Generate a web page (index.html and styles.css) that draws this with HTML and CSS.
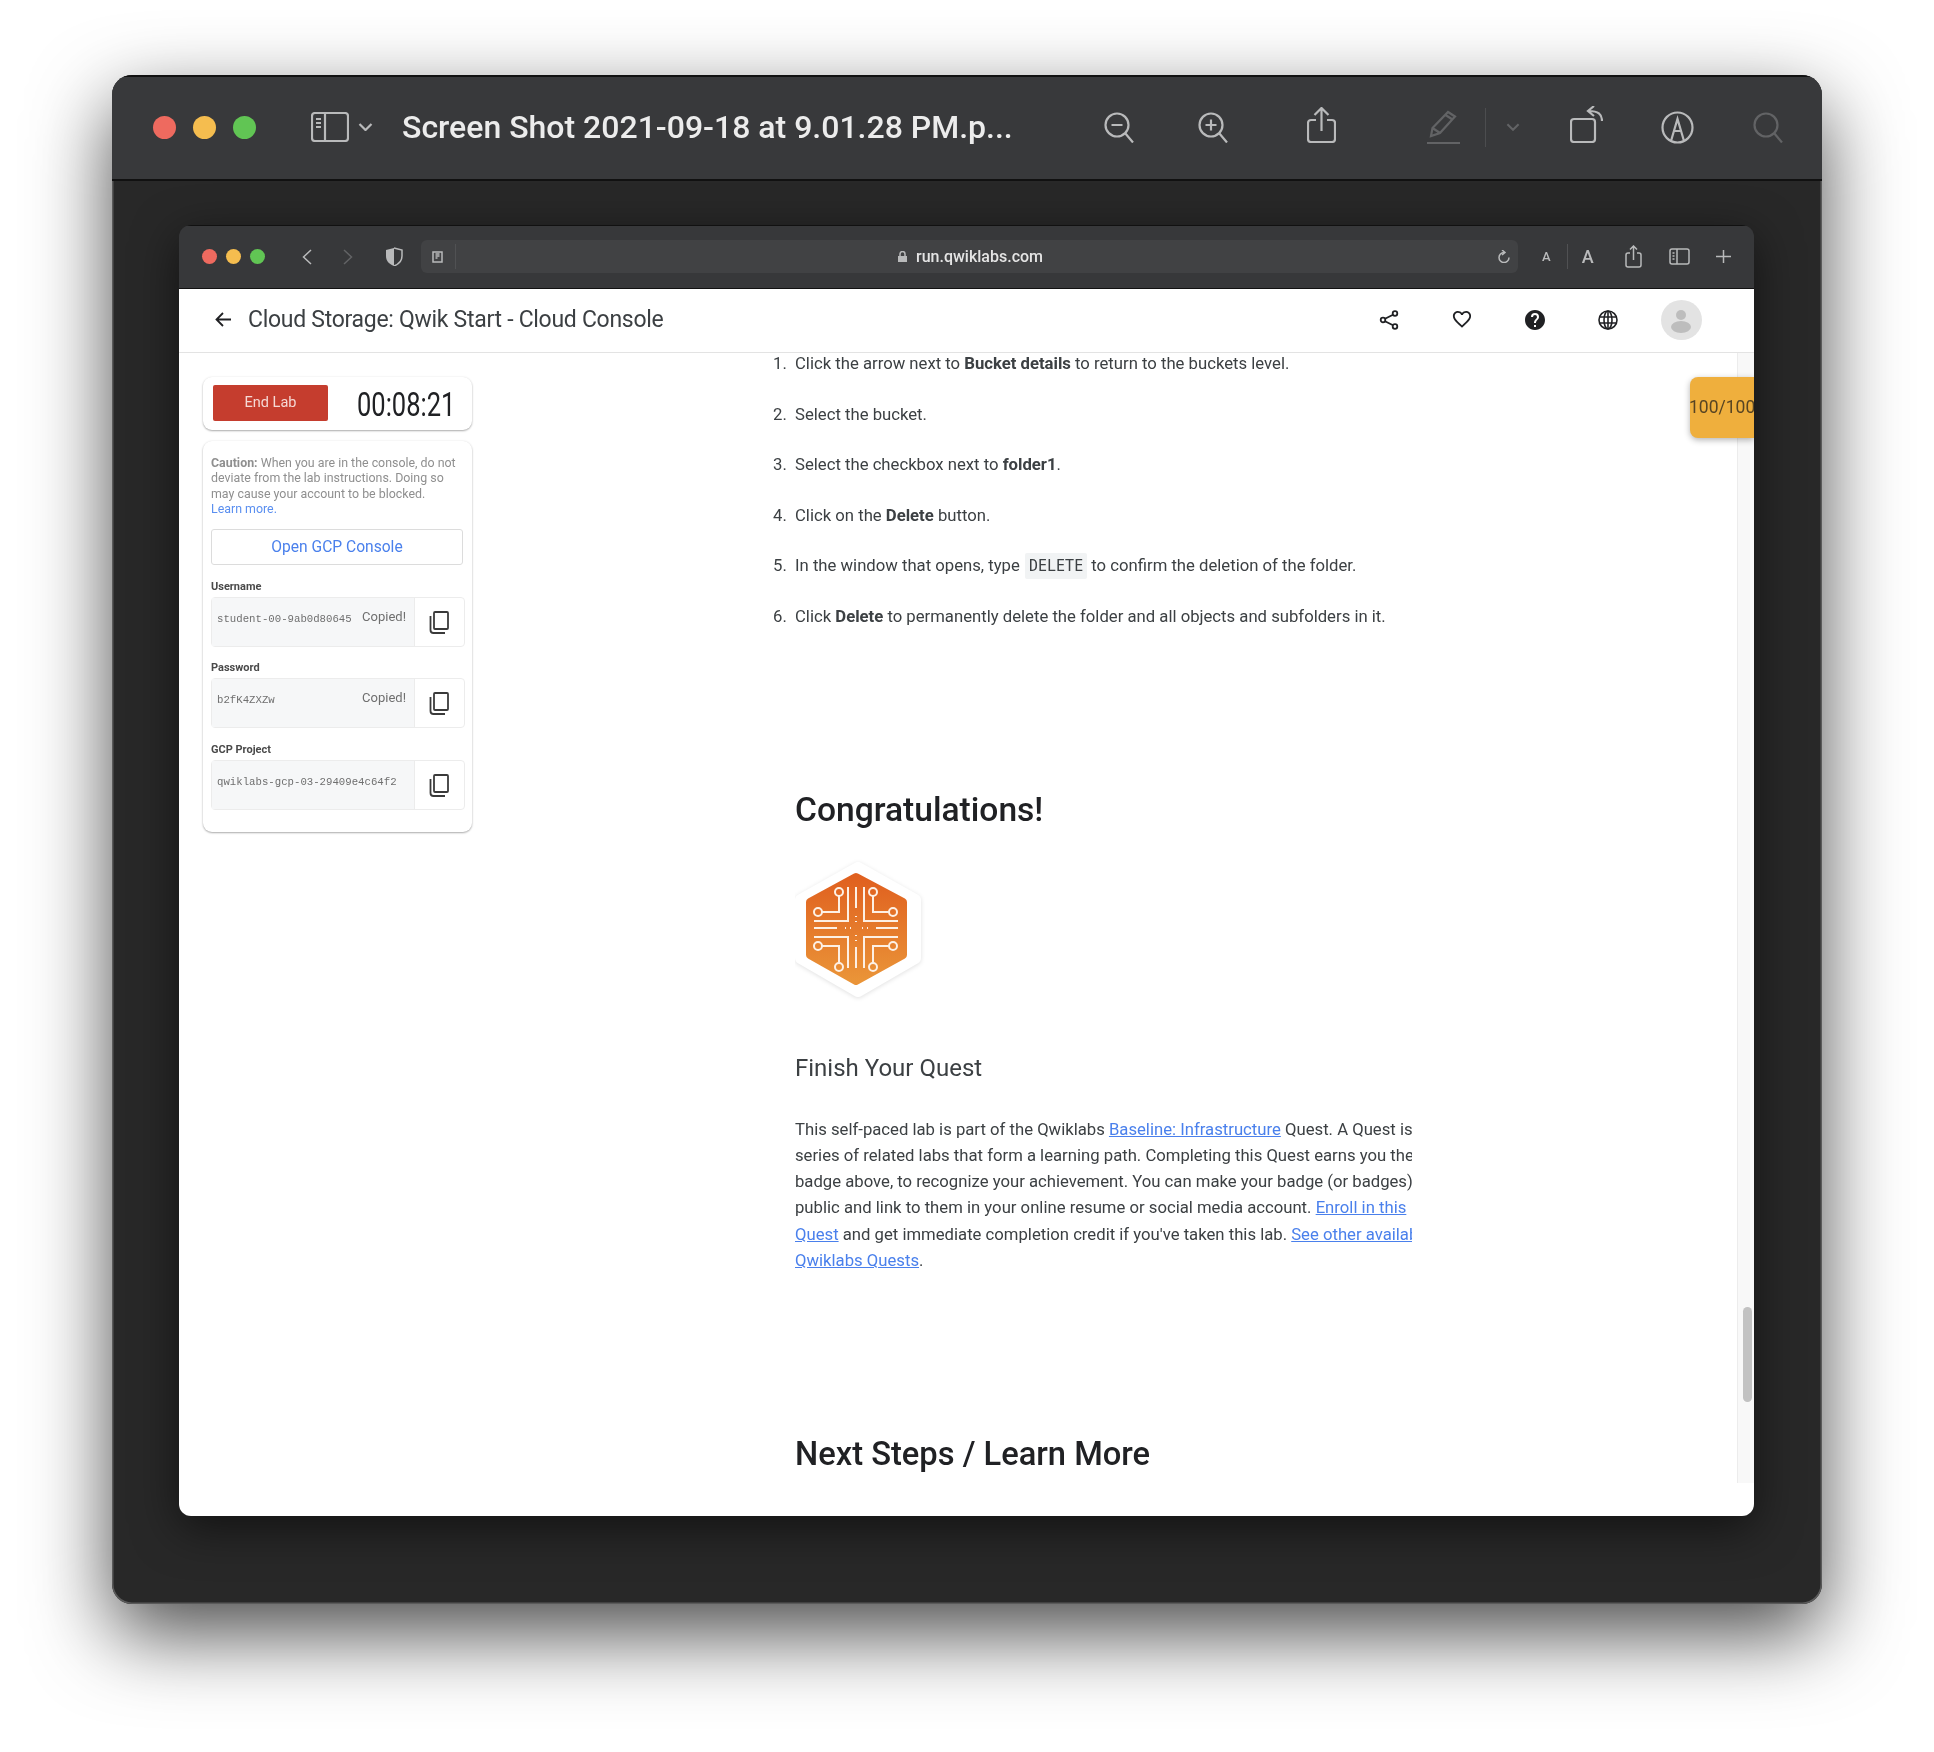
FILE: index.html
```html
<!DOCTYPE html>
<html lang="en">
<head>
    <meta charset="UTF-8">
    <title>Screen Shot 2021-09-18 at 9.01.28 PM</title>
    <link rel="stylesheet" href="styles.css">
</head>
<body>
<div class="preview">
    <div class="preview-bar">
        <div class="lights">
            <span class="light red"></span>
            <span class="light yellow"></span>
            <span class="light green"></span>
        </div>
        <svg class="i-sidebar" width="38" height="30" viewBox="0 0 38 30"><rect x="1" y="1" width="36" height="28" rx="3"/><path d="M14 1v28M5 7h5M5 11h5M5 15h5"/></svg>
        <svg class="i-chev" width="15" height="8" viewBox="0 0 15 8"><path d="M1.500 1l6 6 6-6"/></svg>
        <div class="preview-title">Screen Shot 2021-09-18 at 9.01.28 PM.p...</div>
        <svg class="i-zoomout" width="30" height="31" viewBox="0 0 30 31"><circle cx="13" cy="13" r="11.500"/><path d="M7.500 13h11M21 21l8 9.500" /></svg>
        <svg class="i-zoomin" width="30" height="31" viewBox="0 0 30 31"><circle cx="13" cy="13" r="11.500"/><path d="M7.500 13h11M13 7.500v11M21 21l8 9.500"/></svg>
        <svg class="i-share" width="29" height="36" viewBox="0 0 29 36"><path d="M9 13H4a3 3 0 0 0-3 3v16a3 3 0 0 0 3 3h21a3 3 0 0 0 3-3V16a3 3 0 0 0-3-3h-5M14.500 24V1.500M7.500 8l7-7 7 7"/></svg>
        <svg class="i-pencil dim" width="33" height="34" viewBox="0 0 33 34"><path d="M4 26l1.500-8L21 2l7 4.500L13 23zM5.500 18l7.500 5M18.500 5l7 4.500M0 33h33"/></svg>
        <span class="bar-divider"></span>
        <svg class="i-chev2 dim" width="14" height="8" viewBox="0 0 15 8"><path d="M1.500 1l6 6 6-6"/></svg>
        <svg class="i-rotate" width="33" height="37" viewBox="0 0 33 37"><rect x="1" y="13" width="24" height="23" rx="3"/><path d="M32 15c0-7-4-10-13-10M24 0l-6 5 6 5"/></svg>
        <svg class="i-markup" width="33" height="33" viewBox="0 0 33 33"><circle cx="16.500" cy="16.500" r="15"/><path d="M10 30l6.500-22 6.500 22M13 20h7"/></svg>
        <svg class="i-search dim" width="30" height="31" viewBox="0 0 30 31"><circle cx="13" cy="13" r="11.500"/><path d="M21 21l8 9.500"/></svg>
    </div>

    <div class="browser">
        <div class="browser-bar">
            <div class="lights small">
                <span class="light red"></span>
                <span class="light yellow"></span>
                <span class="light green"></span>
            </div>
            <svg class="b-back" width="10" height="16" viewBox="0 0 10 16"><path d="M9 1L1.500 8 9 15"/></svg>
            <svg class="b-forward dim" width="10" height="16" viewBox="0 0 10 16"><path d="M1 1l7.500 7L1 15"/></svg>
            <svg class="b-shield" width="18" height="19" viewBox="0 0 18 19"><path class="solid" d="M9 1L1 3v6c0 5 3 8 8 10z"/><path d="M9 1l8 2v6c0 5-3 8-8 10"/></svg>
            <div class="url-bar">
                <svg class="b-reader" width="11" height="12" viewBox="0 0 11 12"><rect x="1" y="1" width="9" height="10"/><path d="M3.500 3h4M3.500 5h4M3.500 7h2"/></svg>
                <span class="url-divider"></span>
                <div class="url-text">
                    <svg width="9" height="11" viewBox="0 0 9 11"><path class="solid" d="M0 5h9v6H0z"/><path d="M2 5V3a2.500 2.500 0 0 1 5 0v2"/></svg>
                    <span>run.qwiklabs.com</span>
                </div>
                <svg class="b-reload" width="13" height="13" viewBox="0 0 13 13"><path d="M7 2.500a5 5 0 1 0 5 5M5 0l3 2.500L5 5"/></svg>
            </div>
            <span class="font-small">A</span>
            <span class="url-divider font-sep"></span>
            <span class="font-big">A</span>
            <svg class="b-share" width="17" height="23" viewBox="0 0 17 23"><path d="M5 8H3a2 2 0 0 0-2 2v10a2 2 0 0 0 2 2h11a2 2 0 0 0 2-2V10a2 2 0 0 0-2-2h-2M8.500 15V1M5 4.500L8.500 1 12 4.500"/></svg>
            <svg class="b-sidebar" width="21" height="17" viewBox="0 0 21 17"><rect x="1" y="1" width="19" height="15" rx="2"/><path d="M8 1v15M3.500 5h2M3.500 8h2M3.500 11h2"/></svg>
            <svg class="b-plus" width="15" height="13" viewBox="0 0 15 13"><path d="M7.500 0v13M0 6.500h15"/></svg>
        </div>

        <div class="lab-page">
            <div class="lab-header">
                <svg class="h-arrow" width="16" height="15" viewBox="0 0 16 15"><path d="M16 7.500H2M8 1L1.500 7.500 8 14"/></svg>
                <div class="lab-title">Cloud Storage: Qwik Start - Cloud Console</div>
                <svg class="h-share" width="20" height="20" viewBox="0 0 20 20"><circle cx="16" cy="3.500" r="2.300"/><circle cx="4" cy="10" r="2.300"/><circle cx="16" cy="16.500" r="2.300"/><path d="M14 4.700L6 8.800M6 11.200l8 4.100"/></svg>
                <svg class="h-heart" width="22" height="20" viewBox="0 0 24 22"><path d="M16.500 0c-1.740 0-3.410.81-4.500 2.090C10.910.81 9.240 0 7.500 0 4.420 0 2 2.420 2 5.500c0 3.780 3.400 6.860 8.550 11.540L12 18.350l1.450-1.320C18.600 12.360 22 9.280 22 5.500 22 2.420 19.580 0 16.500 0zm-4.400 15.550l-.1.100-.1-.1C7.140 11.240 4 8.390 4 5.500 4 3.500 5.500 2 7.500 2c1.540 0 3.040.99 3.570 2.360h1.870C13.460 2.990 14.960 2 16.500 2c2 0 3.500 1.500 3.500 3.500 0 2.890-3.140 5.740-7.900 10.050z"/></svg>
                <svg class="h-help" width="20" height="20" viewBox="0 0 24 24"><path d="M12 0C5.370 0 0 5.370 0 12s5.370 12 12 12 12-5.370 12-12S18.630 0 12 0zm1.200 20.400h-2.400V18h2.400v2.400zm2.480-9.300l-1.080 1.100c-.86.880-1.400 1.600-1.400 3.400h-2.400v-.6c0-1.320.54-2.520 1.400-3.400l1.490-1.510c.44-.43.710-1.030.710-1.690a2.400 2.400 0 0 0-4.800 0H7.200a4.800 4.800 0 0 1 9.600 0c0 1.060-.43 2.020-1.120 2.700z"/></svg>
                <svg class="h-globe" width="20" height="20" viewBox="0 0 20 20"><circle cx="10" cy="10" r="9"/><ellipse cx="10" cy="10" rx="4" ry="9"/><path d="M10 1v18M1.500 7h17M1.500 13h17"/></svg>
                <div class="avatar">
                    <svg width="40" height="40" viewBox="0 0 40 40"><circle cx="20" cy="15" r="5"/><ellipse cx="20" cy="27" rx="10" ry="6"/></svg>
                </div>
            </div>

            <div class="score">100/100</div>

            <div class="lab-body">
                <div class="side">
                    <div class="card timer-card">
                        <div class="end-btn">End Lab</div>
                        <div class="timer">00:08:21</div>
                    </div>
                    <div class="card">
                        <p class="caution"><b>Caution:</b> When you are in the console, do not deviate from the lab instructions. Doing so may cause your account to be blocked.<br><a href="#">Learn more.</a></p>
                        <div class="console-btn">Open GCP Console</div>

                        <div class="cred-label">Username</div>
                        <div class="cred">
                            <div class="cred-value"><code>student-00-9ab0d80645</code><span>Copied!</span></div>
                            <div class="cred-copy"><svg width="20" height="23" viewBox="0 0 20 23"><rect x="5" y="1" width="14" height="17" rx="1"/><path d="M1.500 5v14a3 3 0 0 0 3 3H16"/></svg></div>
                        </div>

                        <div class="cred-label">Password</div>
                        <div class="cred">
                            <div class="cred-value"><code>b2fK4ZXZw</code><span>Copied!</span></div>
                            <div class="cred-copy"><svg width="20" height="23" viewBox="0 0 20 23"><rect x="5" y="1" width="14" height="17" rx="1"/><path d="M1.500 5v14a3 3 0 0 0 3 3H16"/></svg></div>
                        </div>

                        <div class="cred-label">GCP Project</div>
                        <div class="cred">
                            <div class="cred-value"><code>qwiklabs-gcp-03-29409e4c64f2</code></div>
                            <div class="cred-copy"><svg width="20" height="23" viewBox="0 0 20 23"><rect x="5" y="1" width="14" height="17" rx="1"/><path d="M1.500 5v14a3 3 0 0 0 3 3H16"/></svg></div>
                        </div>
                    </div>
                </div>

                <div class="doc">
                    <ol class="steps">
                        <li>Click the arrow next to <b>Bucket details</b> to return to the buckets level.</li>
                        <li>Select the bucket.</li>
                        <li>Select the checkbox next to <b>folder1</b>.</li>
                        <li>Click on the <b>Delete</b> button.</li>
                        <li>In the window that opens, type <code>DELETE</code> to confirm the deletion of the folder.</li>
                        <li>Click <b>Delete</b> to permanently delete the folder and all objects and subfolders in it.</li>
                    </ol>
                    <div class="doc-col">
                        <h2 class="congrats">Congratulations!</h2>
                        <svg class="badge" width="127" height="136" viewBox="16 12 127 136">
                            <defs>
                                <linearGradient id="orange" x1="0" y1="0" x2="0" y2="1">
                                    <stop offset="0" stop-color="#e0601f"/>
                                    <stop offset="1" stop-color="#ea9438"/>
                                </linearGradient>
                            </defs>
                            <path class="hex-out" d="M79 18l57 32v58l-57 33-57-33V50z"/>
                            <path class="hex-in" d="M77 27l47 25v53l-47 26-46-26V52z"/>
                            <g class="circuit">
                                <path d="M77 37v21M77 66v1M77 71v1M77 85v1M77 90v1M77 97v21M35 78h23M66 78h1M71 78h1M83 78h1M88 78h1M97 78h22"/>
                                <path d="M69 37v34H35M85 37v34h34M35 87h34v31M119 87H85v31"/>
                                <path d="M60 46v16H43M94 46v16h16M43 96h17v17M110 96H94v17"/>
                                <circle cx="60" cy="42" r="4"/>
                                <circle cx="94" cy="42" r="4"/>
                                <circle cx="39" cy="62" r="4"/>
                                <circle cx="114" cy="62" r="4"/>
                                <circle cx="39" cy="96" r="4"/>
                                <circle cx="114" cy="96" r="4"/>
                                <circle cx="60" cy="117" r="4"/>
                                <circle cx="94" cy="117" r="4"/>
                            </g>
                        </svg>
                        <h3 class="quest">Finish Your Quest</h3>
                        <p class="quest-text">This self-paced lab is part of the Qwiklabs <a href="#">Baseline: Infrastructure</a> Quest. A Quest is a<br>series of related labs that form a learning path. Completing this Quest earns you the<br>badge above, to recognize your achievement. You can make your badge (or badges)<br>public and link to them in your online resume or social media account. <a href="#">Enroll in this</a><br><a href="#">Quest</a> and get immediate completion credit if you've taken this lab. <a href="#">See other available</a><br><a href="#">Qwiklabs Quests</a>.</p>
                        <h2 class="next">Next Steps / Learn More</h2>
                    </div>
                </div>

                <div class="track"><div class="thumb"></div></div>
            </div>
        </div>
    </div>
</div>
</body>
</html>
```

FILE: styles.css
```css
* {
    margin: 0;
    padding: 0;
    box-sizing: border-box;
}

html, body {
    width: 1934px;
    height: 1752px;
    overflow: hidden;
    background-color: #fff;
}

body {
    padding: 75px 112px 0;
    font-family: Roboto, "Liberation Sans", sans-serif;
}

svg {
    display: block;
    flex: none;
    fill: none;
    stroke: #b9babb;
    stroke-width: 2.2;
}

svg.dim {
    stroke: #626365;
}

svg .solid {
    fill: #b9babb;
    stroke: none;
}

/* the whole shot is a soft, upscaled image */
.preview {
    width: 1710px;
    height: 1529px;
    border-radius: 20px;
    background-color: #282828;
    box-shadow: inset 0 0 0 1.500px #5a5a5a, 0 30px 80px rgba(0, 0, 0, 0.7);
    overflow: hidden;
    filter: blur(0.4px);
}

.preview-bar {
    height: 106px;
    display: flex;
    align-items: center;
    padding: 0 0 2px 41px;
    background-color: #38393b;
    border-top: 2px solid #111;
    border-bottom: 2px solid #111;
}

.lights {
    display: flex;
    gap: 17px;
}

.light {
    width: 23px;
    height: 23px;
    border-radius: 50%;
}

.light.red { background-color: #ee6a5f; }
.light.yellow { background-color: #f5bd4f; }
.light.green { background-color: #61c554; }

.lights.small {
    gap: 9px;
}

.lights.small .light {
    width: 15px;
    height: 15px;
}

.i-sidebar { margin-left: 55px; }
.i-chev { margin-left: 9px; }

.preview-title {
    width: 610px;
    margin-left: 29px;
    color: #ececec;
    font-size: 32px;
    font-weight: 500;
    white-space: nowrap;
}

.i-zoomout { margin-left: 92px; }
.i-zoomin { margin-left: 64px; }
.i-share { margin: 0 0 4px 79px; }
.i-pencil { margin-left: 91px; }

.bar-divider {
    width: 1px;
    height: 39px;
    margin-left: 25px;
    background-color: #4c4d4f;
}

.i-chev2 { margin-left: 20px; }
.i-rotate { margin: 0 0 6px 50px; }
.i-markup { margin-left: 58px; }
.i-search { margin-left: 59px; }

.browser {
    width: 1575px;
    height: 1291px;
    margin: 44px 0 0 67px;
    border-radius: 12px;
    overflow: hidden;
    box-shadow: 0 12px 45px rgba(0, 0, 0, 0.55);
}

.browser-bar {
    height: 64px;
    display: flex;
    align-items: center;
    padding: 0 0 1px 23px;
    background-color: #37383a;
    border-top: 1px solid #111;
    border-bottom: 1px solid #111;
}

.browser-bar svg {
    stroke-width: 1.500;
}

.b-back { margin-left: 37px; }
.b-forward { margin-left: 31px; }
.b-shield { margin-left: 32px; }

.url-bar {
    width: 1097px;
    height: 33px;
    margin-left: 18px;
    display: flex;
    align-items: center;
    border-radius: 6px;
    background-color: #414244;
}

.b-reader { margin-left: 11px; }

.url-divider {
    width: 1px;
    height: 25px;
    margin-left: 12px;
    background-color: #505153;
}

.url-text {
    flex: 1;
    margin-left: 442px;
    display: flex;
    align-items: center;
    gap: 9px;
    color: #e4e4e4;
    font-size: 16px;
    font-weight: 500;
}

.b-reload { margin-right: 8px; }

.font-small {
    margin-left: 24px;
    color: #b9babb;
    font-size: 13px;
    font-weight: 500;
}

.font-sep {
    margin-left: 16px;
}

.font-big {
    margin-left: 14px;
    color: #b9babb;
    font-size: 18px;
    font-weight: 500;
}

.b-share { margin-left: 31px; }
.b-sidebar { margin-left: 27px; }
.b-plus { margin-left: 26px; }

.lab-page {
    height: 1227px;
    background-color: #fff;
    position: relative;
    display: flex;
    flex-direction: column;
}

.lab-header {
    height: 64px;
    flex: none;
    display: flex;
    align-items: center;
    padding: 0 0 2px 36px;
    border-bottom: 1px solid #e3e3e3;
}

.lab-header svg {
    fill: #202124;
    stroke: none;
}

.lab-header .h-arrow,
.lab-header .h-share {
    fill: none;
    stroke: #202124;
    stroke-width: 1.800;
}

.lab-title {
    width: 416px;
    margin-left: 17px;
    color: #3c4043;
    font-size: 23px;
    letter-spacing: -0.290px;
    white-space: nowrap;
}

.h-share { margin-left: 715px; }
.h-heart { margin: 2px 0 0 52px; }
.h-help { margin-left: 52px; }

.lab-header .h-globe {
    margin-left: 53px;
    fill: none;
    stroke: #202124;
    stroke-width: 1.600;
}

.avatar {
    width: 41px;
    height: 40px;
    margin-left: 43px;
    border-radius: 50%;
    background-color: #e3e3e3;
}

.lab-header .avatar svg {
    fill: #bdbdbd;
}

.score {
    position: absolute;
    top: 88px;
    right: 0;
    width: 64px;
    height: 61px;
    border-radius: 8px 0 0 8px;
    background-color: #efaf3d;
    box-shadow: 0 2px 6px rgba(0, 0, 0, 0.3);
    color: #574423;
    font-size: 17.500px;
    line-height: 61px;
    text-indent: -1px;
    white-space: nowrap;
    overflow: hidden;
    z-index: 2;
}

.lab-body {
    height: 1130px;
    display: flex;
    overflow: hidden;
}

.side {
    width: 594px;
    flex: none;
    padding: 24px 0 0 24px;
}

.card {
    width: 269px;
    margin-bottom: 11px;
    padding: 8px 8px 22px;
    border-radius: 9px;
    background-color: #fff;
    box-shadow: 0 1px 2px rgba(0, 0, 0, 0.32), 0 0 3px rgba(0, 0, 0, 0.05);
}

.timer-card {
    height: 53px;
    padding: 8px 0 0 10px;
    display: flex;
}

.end-btn {
    width: 115px;
    height: 36px;
    border-radius: 2px;
    background-color: #c53d2e;
    color: #f5d9d5;
    font-size: 14.500px;
    line-height: 36px;
    text-align: center;
}

.timer {
    margin-left: 29px;
    width: 96px;
    color: #202124;
    font-size: 34px;
    line-height: 38px;
    transform: scaleX(0.75);
    transform-origin: left;
    white-space: nowrap;
}

.caution {
    padding-top: 6px;
    color: #8f8f8f;
    font-size: 12.400px;
    line-height: 15.300px;
}

.caution a {
    color: #5a8ff0;
    text-decoration: none;
}

.console-btn {
    width: 252px;
    height: 36px;
    margin-top: 13px;
    border: 1px solid #dcdcdc;
    border-radius: 3px;
    color: #4a80ec;
    font-size: 15.600px;
    line-height: 34px;
    text-align: center;
}

.cred-label {
    margin-top: 14.500px;
    color: #4a4a4a;
    font-size: 11px;
    font-weight: 700;
    line-height: 14px;
}

.cred {
    width: 254px;
    height: 50px;
    margin-top: 3px;
    display: flex;
    border: 1px solid #ececec;
    border-radius: 4px;
}

.cred-value {
    width: 203px;
    padding: 0 8px 0 5px;
    display: flex;
    justify-content: space-between;
    background-color: #f6f7f8;
    color: #6f6f6f;
    font-size: 13px;
    line-height: 38px;
    border-right: 1px solid #ececec;
}

.cred-value code {
    font-family: "Liberation Mono", monospace;
    font-size: 10.700px;
    line-height: 42px;
}

.cred-copy {
    flex: 1;
    padding: 13px 0 0 14px;
}

.cred-copy svg {
    stroke: #3a3a3a;
    stroke-width: 1.800;
}

.doc {
    width: 964px;
    flex: none;
    color: #3c4043;
    font-size: 16.700px;
    line-height: 26px;
}

.steps {
    margin-top: -2px;
    list-style: none;
    counter-reset: step;
}

.steps li {
    height: 26px;
    margin-bottom: 24.500px;
    padding-left: 22px;
    counter-increment: step;
    white-space: nowrap;
}

.steps li::before {
    content: counter(step) ".";
    display: inline-block;
    width: 22px;
    margin-left: -22px;
}

.steps code {
    padding: 4px;
    margin: 0 0 0 1px;
    border-radius: 2px;
    background-color: #f1f3f4;
    font-family: "DejaVu Sans Mono", monospace;
    font-size: 15px;
}

.doc-col {
    width: 617px;
    margin: 0 0 0 22px;
    overflow: hidden;
}

.congrats, .next {
    color: #202124;
    font-weight: 500;
    line-height: 40px;
}

.congrats {
    margin-top: 135.500px;
    font-size: 33.600px;
}

.badge {
    margin-top: 32px;
    overflow: visible;
    stroke: none;
}

.hex-out {
    fill: #fff;
    filter: drop-shadow(0 1px 2px rgba(0, 0, 0, 0.12));
    stroke: #fff;
    stroke-width: 12;
    stroke-linejoin: round;
}

.hex-in {
    fill: url(#orange);
    stroke: url(#orange);
    stroke-width: 8;
    stroke-linejoin: round;
}

.circuit {
    stroke: #fdf0e4;
    stroke-width: 2;
    fill: none;
}

.quest {
    margin-top: 54px;
    color: #3c4043;
    font-size: 24px;
    font-weight: 400;
    line-height: 32px;
}

.quest-text {
    margin-top: 33px;
    line-height: 26.300px;
    white-space: nowrap;
}

.quest-text a {
    color: #4a80ec;
}

.next {
    margin-top: 160px;
    font-size: 32.700px;
}

.track {
    width: 17px;
    flex: none;
    margin-left: auto;
    padding: 954px 0 0 5px;
    background-color: #f8f8f8;
    border-left: 1px solid #ececec;
}

.thumb {
    width: 9px;
    height: 95px;
    border-radius: 5px;
    background-color: #c2c2c2;
}
```
